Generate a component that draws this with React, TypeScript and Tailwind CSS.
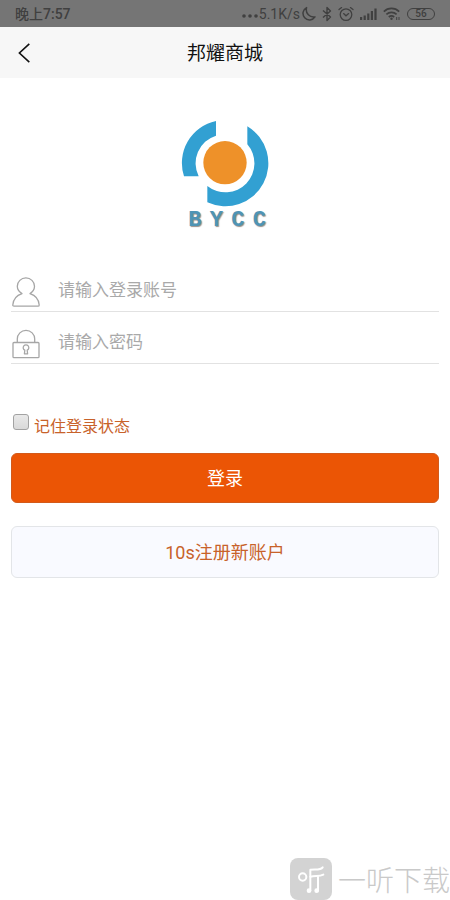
import { useState } from 'react';

function StatusBar() {
  return (
    <div className="flex h-[27px] items-center justify-between bg-[#757575] pr-[15px] pl-[15px] text-[#404040]">
      <span className="pt-px text-sm font-medium">晚上7:57</span>
      <div className="flex items-center gap-[6px]">
        <div className="flex items-center gap-px">
          <svg className="mt-1 h-1 w-4" viewBox="0 0 16 4" fill="currentColor">
            <circle cx="2" cy="2" r="1.8" />
            <circle cx="8" cy="2" r="1.8" />
            <circle cx="14" cy="2" r="1.8" />
          </svg>
          <span className="text-sm">5.1K/s</span>
          <svg className="h-4 w-[15px]" viewBox="0 0 15 16" fill="none" stroke="currentColor" strokeWidth="1.5" strokeLinejoin="round">
            <path d="M5.6 1.6 A6.5 6.5 0 1 0 14 10.9 C9 12 4 7.4 5.6 1.6Z" />
          </svg>
        </div>
        <svg className="h-4 w-[10px]" viewBox="0 0 10 16" fill="none" stroke="currentColor" strokeWidth="1.4" strokeLinejoin="round">
          <path d="M1 4.5 L8.5 11 L5 14.5 V1.5 L8.5 5 L1 11.5" />
        </svg>
        <svg className="h-4 w-4" viewBox="0 0 16 16" fill="none" stroke="currentColor" strokeWidth="1.3" strokeLinecap="round">
          <circle cx="8" cy="8.6" r="5.8" />
          <path d="M1 3.6 L3.6 1.6 M15 3.6 L12.4 1.6 M5.6 7.6 L8 9.8 L10.6 7.6" />
        </svg>
        <svg className="h-4 w-[17px]" viewBox="0 0 17 16" fill="currentColor">
          <rect x="0" y="11" width="2.2" height="3" />
          <rect x="3.6" y="9.5" width="2.2" height="4.5" />
          <rect x="7.2" y="7.5" width="2.2" height="6.5" />
          <rect x="10.8" y="5" width="2.2" height="9" />
          <rect x="14.4" y="2.5" width="2.2" height="11.5" />
        </svg>
        <svg className="h-4 w-[18px]" viewBox="0 0 18 16" fill="none" stroke="currentColor" strokeWidth="1.7">
          <path d="M0.8 5.6 A11 11 0 0 1 16.2 5.6 M3.4 8.4 A7.6 7.6 0 0 1 13.6 8.4 M5.8 11 A4.2 4.2 0 0 1 11.2 11" />
          <circle cx="8.5" cy="12.8" r="1.2" fill="currentColor" stroke="none" />
          <path d="M13.7 11 V14 M16 11 V14" strokeWidth="1" />
        </svg>
        <span className="flex h-3 w-7 items-center justify-center rounded-full border border-[#404040] text-[10px] font-medium">
          56
        </span>
      </div>
    </div>
  );
}

function Logo() {
  return (
    <div className="flex flex-col items-center pt-[42px]">
      <svg className="h-[87px] w-[90px]" viewBox="46 44 270 261">
        <path fill="#32a0d2" d="M154 47 A129 129 0 0 0 58 213 H102 A87 87 0 0 1 154 91Z" />
        <path fill="#32a0d2" d="M248 63 A129 129 0 0 1 128 291 V242 A87 87 0 0 0 248 117Z" />
        <circle cx="181" cy="172" r="65" fill="#ee9129" />
      </svg>
      <div className="mt-[2px] grid w-[90px] grid-cols-4 pl-1 text-center font-['Liberation_Mono',monospace] text-[22px] leading-6 font-bold text-[#4f94b5] [text-shadow:1px_1px_1px_#99908a]">
        <span>B</span>
        <span>Y</span>
        <span>C</span>
        <span>C</span>
      </div>
    </div>
  );
}

function UserIcon() {
  return (
    <svg className="h-[30px] w-7" viewBox="0 0 28 30" fill="none" stroke="#a6a6a6" strokeWidth="1.3" strokeLinejoin="round">
      <path d="M10 16.6 C7 14.8 5.3 12.6 5.3 9.3 A8.6 8.4 0 0 1 22.5 9.3 C22.5 12.6 20.8 14.8 18 16.6 C23.6 18.4 26.8 22 27.2 28 Q27.2 29.2 26 29.2 H2 Q0.8 29.2 0.8 28 C1.2 22 4.4 18.4 10 16.6Z" />
    </svg>
  );
}

function LockIcon() {
  return (
    <svg className="h-[30px] w-7" viewBox="0 0 28 30" fill="none" stroke="#a6a6a6" strokeWidth="1.3" strokeLinejoin="round">
      <rect x="1" y="13.5" width="26" height="15.2" rx="1" />
      <path d="M5.3 13.5 V10 A8.7 8.7 0 0 1 22.7 10 V13.5" />
      <path d="M12.8 21.2 A2.8 2.8 0 1 1 15.2 21.2 L15.6 24.8 H12.4Z" />
    </svg>
  );
}

function Watermark() {
  return (
    <div className="mt-auto flex items-center justify-end gap-[6px] text-[28px] leading-[42px] font-light text-[#c9c9c9]">
      <svg className="h-[42px] w-[42px]" viewBox="0 0 126 126" fill="none" stroke="#ffffff" strokeWidth="6" strokeLinecap="round" strokeLinejoin="round">
        <rect width="126" height="126" rx="24" fill="#d3d3d3" stroke="none" />
        <circle cx="38" cy="57" r="11" />
        <path d="M98 28 C92 37 82 34 61 35 V98" />
        <path d="M61 56 C76 52 88 57 100 50" />
        <path d="M84 56 V98" />
        <circle cx="57" cy="98" r="4" fill="#ffffff" />
        <circle cx="80" cy="98" r="4" fill="#ffffff" />
      </svg>
      <span className="font-['Noto_Sans_CJK_SC',sans-serif]">一听下载</span>
    </div>
  );
}

export default function App() {
  const [account, setAccount] = useState('');
  const [password, setPassword] = useState('');
  const [remember, setRemember] = useState(false);

  return (
    <div className="flex min-h-screen flex-col bg-white font-[Roboto,'Noto_Sans_CJK_SC',sans-serif]">
      <StatusBar />

      <header className="grid h-[51px] grid-cols-[48px_1fr_48px] items-center bg-[#f7f7f7]">
        <button type="button" aria-label="返回" className="flex h-full items-center pl-[18px]">
          <svg className="h-5 w-3" viewBox="0 0 12 20" fill="none" stroke="#111111" strokeWidth="1.6">
            <path d="M11.3 0.8 L1.4 10 L11.3 19.2" />
          </svg>
        </button>
        <h1 className="pt-1 text-center text-[19px] text-[#111111]">邦耀商城</h1>
      </header>

      <Logo />

      <form className="mt-[27px] px-[11px]" onSubmit={(e) => e.preventDefault()}>
        <div className="flex h-[52px] items-end border-b border-[#e2e2e2] pb-1 pl-px">
          <label htmlFor="account" aria-label="登录账号">
            <UserIcon />
          </label>
          <input
            id="account"
            type="text"
            value={account}
            onChange={(e) => setAccount(e.target.value)}
            placeholder="请输入登录账号"
            className="ml-[18px] h-9 min-w-0 flex-1 pt-[2px] text-[17px] placeholder:text-[#a9a9a9] focus:outline-none"
          />
        </div>
        <div className="flex h-[52px] items-end border-b border-[#e2e2e2] pb-1 pl-px">
          <label htmlFor="password" aria-label="密码">
            <LockIcon />
          </label>
          <input
            id="password"
            type="password"
            value={password}
            onChange={(e) => setPassword(e.target.value)}
            placeholder="请输入密码"
            className="ml-[18px] h-9 min-w-0 flex-1 pt-[2px] text-[17px] placeholder:text-[#a9a9a9] focus:outline-none"
          />
        </div>

        <div className="mt-[49px] flex h-6 items-start gap-[5px] pl-[2px]">
          <input
            id="remember"
            type="checkbox"
            checked={remember}
            onChange={(e) => setRemember(e.target.checked)}
            className="mt-px h-4 w-4 appearance-none rounded-[3px] border border-[#a2a2a2] bg-linear-to-b from-[#e9e9e9] to-[#d9d9d9] checked:from-[#eb5505] checked:to-[#c85a1c]"
          />
          <label htmlFor="remember" className="pt-[2px] text-base text-[#c8622a]">
            记住登录状态
          </label>
        </div>

        <button
          type="submit"
          className="mt-[16px] h-[50px] w-full rounded-md border border-[#d35a1a] bg-[#eb5505] pt-[2px] text-lg text-white"
        >
          登录
        </button>
        <button
          type="button"
          className="mt-[23px] h-[52px] w-full rounded-md border border-[#e3e5e8] bg-[#f9faff] pt-[2px] text-lg text-[#c8622a]"
        >
          10s注册新账户
        </button>
      </form>

      <Watermark />
    </div>
  );
}
